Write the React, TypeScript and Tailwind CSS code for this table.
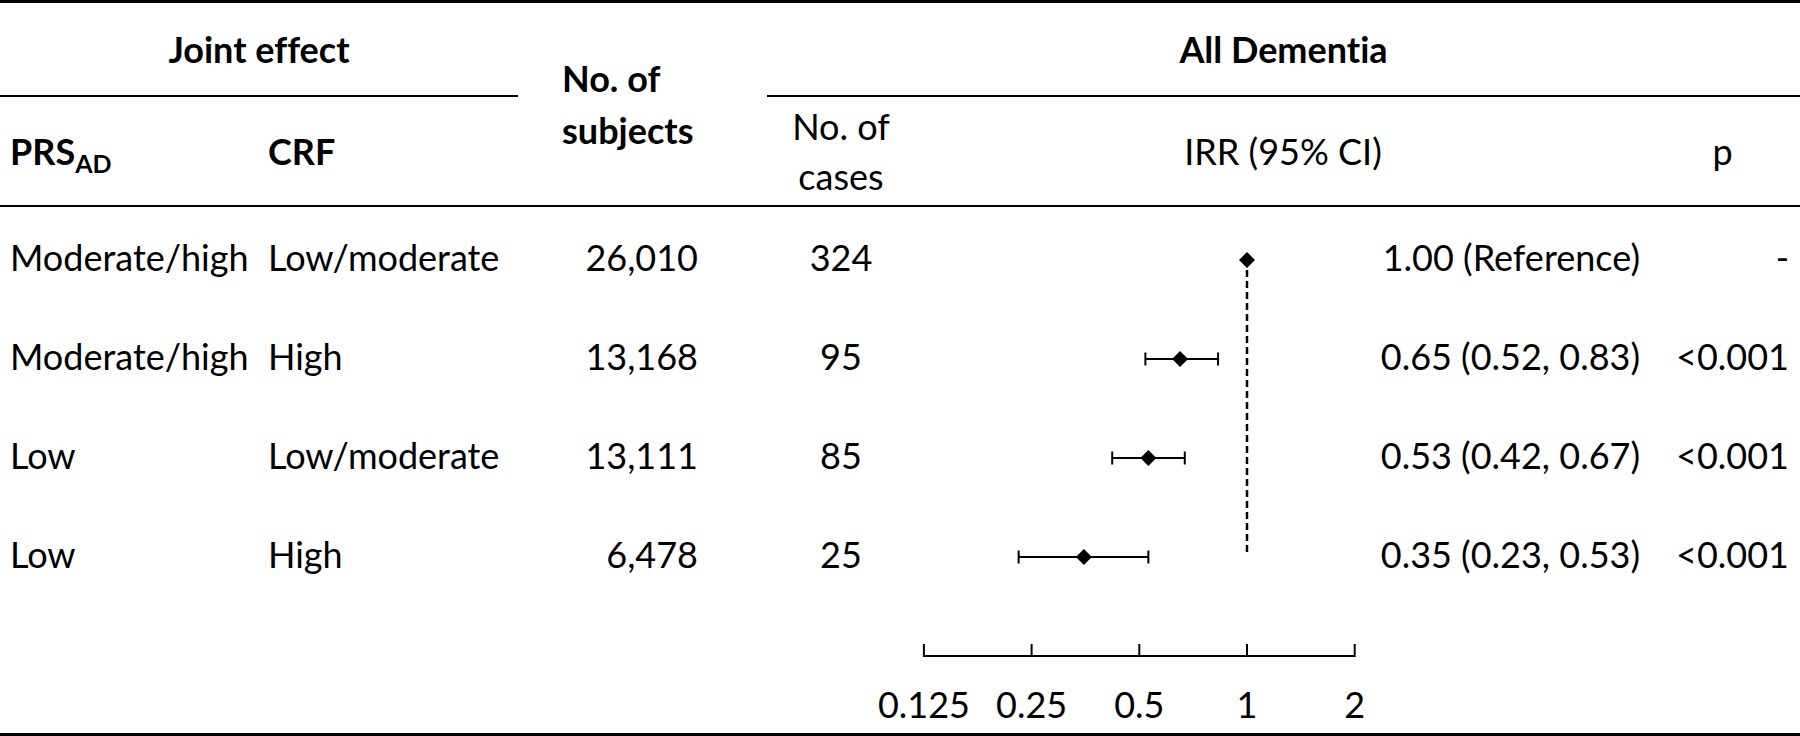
const rows = [
  { prs: 'Moderate/high', crf: 'Low/moderate', n: '26,010', cases: '324', irr: '1.00 (Reference)', p: '-', est: 1, lo: 0, hi: 0 },
  { prs: 'Moderate/high', crf: 'High', n: '13,168', cases: '95', irr: '0.65 (0.52, 0.83)', p: '<0.001', est: 0.65, lo: 0.52, hi: 0.83 },
  { prs: 'Low', crf: 'Low/moderate', n: '13,111', cases: '85', irr: '0.53 (0.42, 0.67)', p: '<0.001', est: 0.53, lo: 0.42, hi: 0.67 },
  { prs: 'Low', crf: 'High', n: '6,478', cases: '25', irr: '0.35 (0.23, 0.53)', p: '<0.001', est: 0.35, lo: 0.23, hi: 0.53 },
]

const rowStarts = ['row-start-3', 'row-start-4', 'row-start-5', 'row-start-6']

// x position on the log2 axis, 1 sits at 332 inside the plot column
const xOf = (v: number) => 332 + 107.7 * Math.log2(v)
const ticks = [
  { v: 0.125, label: '0.125' },
  { v: 0.25, label: '0.25' },
  { v: 0.5, label: '0.5' },
  { v: 1, label: '1' },
  { v: 2, label: '2' },
]

const Diamond = ({ x, y }: { x: number; y: number }) => (
  <polygon points={`${x},${y - 8} ${x + 8},${y} ${x},${y + 8} ${x - 8},${y}`} fill="#000" />
)

const ForestPlot = () => {
  const centers = [53, 152, 251, 350]
  return (
    <svg width="445" height="526" className="overflow-visible col-start-5 row-start-3 row-span-5">
      <line x1={xOf(1)} x2={xOf(1)} y1={63} y2={346} stroke="#000" strokeWidth="2.5" strokeDasharray="7 4" />
      {rows.map((r, i) => (
        <g key={i}>
          {r.lo > 0 && (
            <g stroke="#000" strokeWidth="2">
              <line x1={xOf(r.lo)} x2={xOf(r.hi)} y1={centers[i]} y2={centers[i]} />
              <line x1={xOf(r.lo)} x2={xOf(r.lo)} y1={centers[i] - 6.5} y2={centers[i] + 6.5} />
              <line x1={xOf(r.hi)} x2={xOf(r.hi)} y1={centers[i] - 6.5} y2={centers[i] + 6.5} />
            </g>
          )}
          <Diamond x={xOf(r.est)} y={centers[i]} />
        </g>
      ))}
      <g stroke="#000" strokeWidth="2">
        <line x1={xOf(0.125)} x2={xOf(2)} y1={449} y2={449} />
        {ticks.map((t) => (
          <line key={t.label} x1={xOf(t.v)} x2={xOf(t.v)} y1={437} y2={450} />
        ))}
      </g>
      {ticks.map((t) => (
        <text key={t.label} x={xOf(t.v)} y={511} textAnchor="middle" fontSize="36" fill="#000" fontFamily="Lato, sans-serif">
          {t.label}
        </text>
      ))}
    </svg>
  )
}

const App = () => {
  return (
    <div className="w-[1800px] h-[736px] bg-white text-black font-[Lato,sans-serif] text-[36px] whitespace-nowrap [font-variant-ligatures:none]">
      <div className="grid grid-cols-[262px_256px_249px_148px_445px_291px_149px] grid-rows-[94px_110px_99px_99px_99px_99px_130px] border-t-[3px] border-b-[3px] border-black">

        <div className="col-start-1 col-span-2 row-start-1 border-b-2 border-black flex items-center justify-center font-bold">
          Joint effect
        </div>
        <div className="col-start-3 row-start-1 row-span-2 border-b-2 border-black flex items-center pl-[44px] font-bold leading-[52px]">
          <div>No. of<br />subjects</div>
        </div>
        <div className="col-start-4 col-span-4 row-start-1 border-b-2 border-black flex items-center justify-center font-bold">
          All Dementia
        </div>

        <div className="col-start-1 row-start-2 border-b-2 border-black flex items-center pl-[10px] font-bold">
          <span>PRS<span className="text-[25px] relative top-[8px]">AD</span></span>
        </div>
        <div className="col-start-2 row-start-2 border-b-2 border-black flex items-center pl-[6px] font-bold">
          CRF
        </div>
        <div className="col-start-4 row-start-2 border-b-2 border-black flex items-center justify-center text-center leading-[50px]">
          <div>No. of<br />cases</div>
        </div>
        <div className="col-start-5 col-span-2 row-start-2 border-b-2 border-black flex items-center justify-center">
          IRR (95% CI)
        </div>
        <div className="col-start-7 row-start-2 border-b-2 border-black flex items-center justify-center pr-[6px]">
          p
        </div>

        {rows.map((r, i) => (
          <div key={i} className="contents">
            <div className={`col-start-1 ${rowStarts[i]} flex items-center pl-[10px]`}>{r.prs}</div>
            <div className={`col-start-2 ${rowStarts[i]} flex items-center pl-[6px]`}>{r.crf}</div>
            <div className={`col-start-3 ${rowStarts[i]} flex items-center justify-end pr-[69px]`}>{r.n}</div>
            <div className={`col-start-4 ${rowStarts[i]} flex items-center justify-center`}>{r.cases}</div>
            <div className={`col-start-6 ${rowStarts[i]} flex items-center justify-end pr-[11px]`}>{r.irr}</div>
            <div className={`col-start-7 ${rowStarts[i]} flex items-center justify-end pr-[11px]`}>{r.p}</div>
          </div>
        ))}

        <ForestPlot />
      </div>
    </div>
  )
}

export default App
